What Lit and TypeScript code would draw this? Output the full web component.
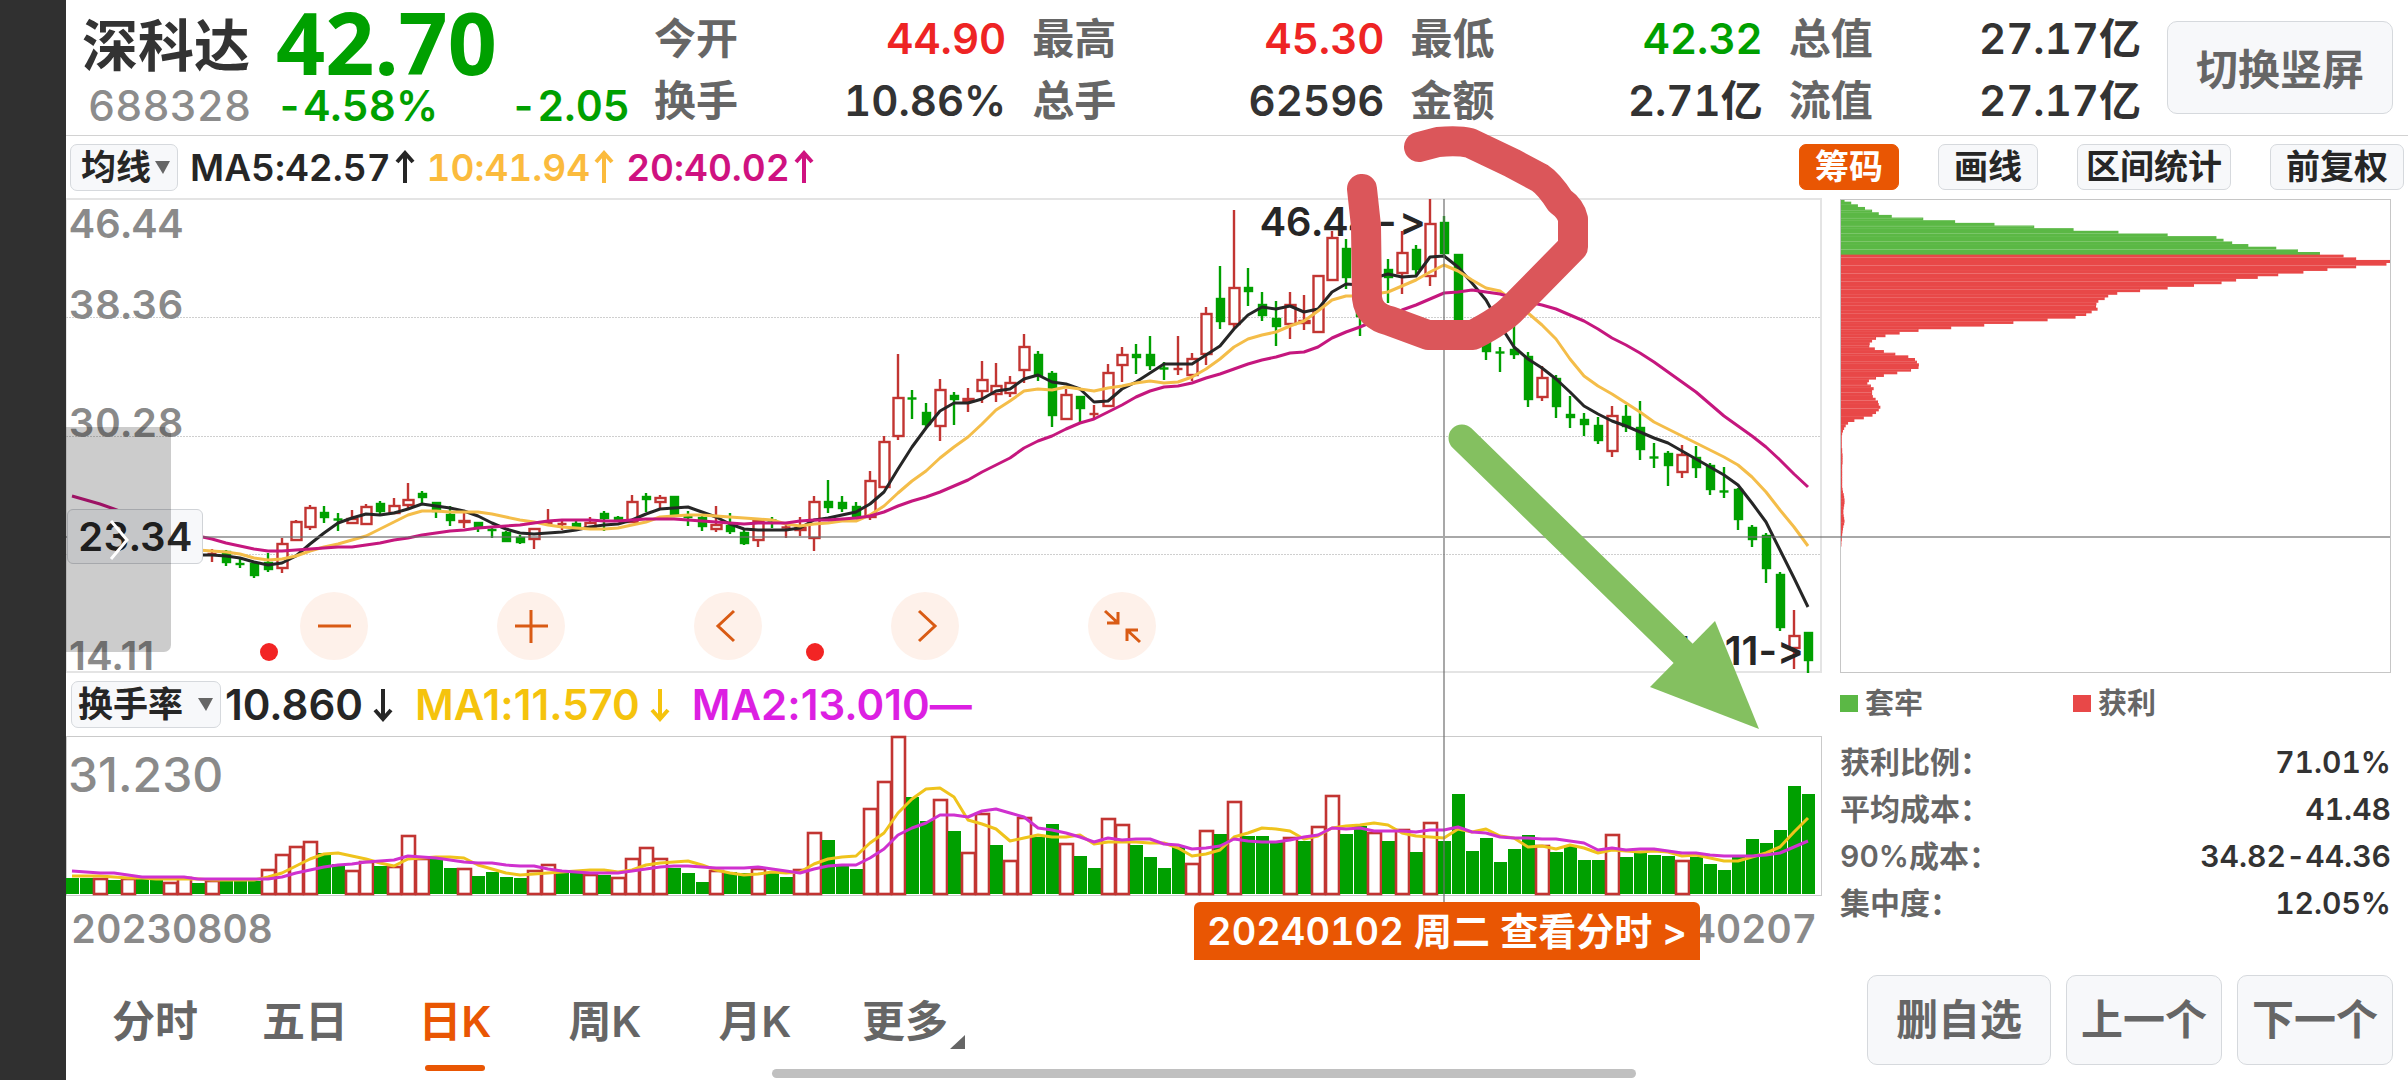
import { LitElement, html, svg, css } from "lit";
import { customElement, property } from "lit/decorators.js";

type Candle = [up: number, high: number, open: number, close: number, low: number] | null;

const STEP = 14;
const FIRST_X = 72;
const xAt = (i: number) => FIRST_X + STEP * i;

// Daily candles, from the first visible one; null where nothing is drawn.
const FIRST_CANDLE = 10;
const candles: Candle[] = [
  [1, 549, 553, 555, 562], [0, 550, 551, 563, 566], [0, 558, 563, 565, 568], [0, 563, 563, 576, 578],
  [0, 553, 562, 570, 572], [1, 538, 543, 569, 573], [1, 520, 521, 541, 541], [1, 505, 507, 528, 530],
  [0, 506, 512, 518, 523], [0, 513, 519, 520, 531], [1, 510, 518, 524, 524], [1, 504, 506, 525, 525],
  [0, 501, 503, 512, 515], [1, 498, 505, 514, 514], [1, 483, 499, 506, 508], [0, 491, 493, 498, 504],
  [0, 502, 502, 512, 518], [0, 506, 514, 521, 526], [1, 513, 520, 523, 528], [0, 522, 522, 528, 532],
  [0, 527, 529, 531, 538], [0, 531, 532, 542, 542], [0, 535, 537, 543, 544], [1, 528, 528, 540, 549],
  [1, 509, 522, 524, 524], [1, 520, 523, 525, 530], [0, 521, 523, 528, 528], [1, 517, 522, 528, 528],
  [0, 511, 513, 519, 531], [0, 516, 517, 520, 521], [1, 495, 501, 523, 523], [0, 493, 496, 500, 512],
  [1, 495, 497, 503, 508], [0, 496, 496, 515, 515], [0, 511, 516, 518, 526], [0, 515, 517, 527, 531],
  [1, 506, 524, 530, 532], [0, 513, 525, 532, 534], [0, 529, 532, 544, 545], [1, 520, 520, 541, 547],
  [0, 517, 520, 521, 528], [1, 523, 527, 528, 538], [1, 517, 527, 531, 536], [1, 496, 501, 539, 551],
  [0, 480, 501, 508, 513], [0, 496, 502, 509, 512], [0, 502, 506, 517, 517], [1, 471, 480, 518, 520],
  [1, 436, 441, 488, 488], [1, 354, 397, 437, 440], [0, 390, 398, 399, 419], [0, 403, 412, 425, 427],
  [1, 379, 389, 427, 441], [0, 392, 395, 400, 425], [1, 388, 398, 402, 412], [1, 361, 379, 392, 403],
  [1, 363, 385, 395, 402], [1, 376, 382, 394, 397], [1, 334, 346, 371, 383], [0, 351, 354, 376, 381],
  [0, 371, 373, 416, 427], [1, 389, 394, 420, 420], [0, 396, 396, 409, 422], [1, 405, 413, 415, 420],
  [1, 364, 372, 407, 407], [1, 347, 354, 366, 382], [0, 344, 354, 358, 374], [0, 336, 354, 366, 370],
  [0, 362, 368, 369, 380], [1, 336, 368, 370, 375], [1, 353, 358, 376, 381], [1, 307, 313, 355, 365],
  [0, 266, 298, 322, 329], [1, 210, 287, 325, 329], [0, 268, 287, 292, 306], [0, 292, 304, 316, 321],
  [0, 301, 318, 327, 346], [1, 292, 304, 325, 339], [1, 295, 320, 324, 330], [1, 275, 275, 333, 333],
  [1, 231, 237, 281, 281], [0, 239, 248, 278, 289], [0, 280, 290, 317, 336], null,
  [0, 259, 269, 278, 303], [1, 231, 252, 274, 294], [0, 245, 249, 270, 275], [1, 199, 223, 277, 286],
  [0, 216, 222, 254, 258], [0, 254, 254, 340, 340], null, [0, 330, 335, 352, 360],
  [0, 347, 352, 353, 372], [0, 322, 349, 355, 359], [0, 352, 356, 400, 407], [1, 366, 377, 398, 401],
  [0, 375, 378, 407, 418], [0, 396, 414, 418, 428], [0, 413, 419, 425, 436], [0, 417, 425, 441, 444],
  [1, 406, 415, 452, 457], [0, 405, 416, 427, 432], [0, 401, 427, 450, 460], [0, 443, 457, 458, 468],
  [0, 451, 453, 466, 486], [1, 445, 454, 473, 478], [0, 446, 457, 468, 478], [0, 463, 465, 490, 495],
  [0, 467, 491, 492, 498], [0, 488, 489, 520, 530], [0, 525, 527, 540, 547], [0, 533, 535, 569, 583],
  [0, 572, 574, 628, 631], [1, 610, 635, 649, 669], [0, 632, 632, 661, 673],
];

// The two shorter averages start one day before the first candle.
const FIRST_AVERAGE = 9;
const ma5 = [
  555, 555, 556, 558, 562, 565, 563, 556, 544, 533, 523, 518, 514, 515, 513, 509, 504, 506, 508, 511, 516, 523, 529, 533,
  534, 533, 532, 530, 527, 525, 524, 520, 514, 509, 508, 507, 512, 517, 524, 529, 530, 530, 530, 528, 520, 518, 515, 512,
  504, 492, 469, 447, 428, 411, 403, 403, 399, 391, 389, 379, 375, 382, 384, 389, 402, 401, 389, 382, 373, 364, 364, 364,
  355, 346, 329, 315, 307, 309, 306, 312, 309, 292, 284, 285, 278, 274, 277, 276, 257, 256, 267, 283, 300, 325, 347, 359,
  368, 379, 392, 406, 414, 421, 426, 432, 438, 443, 451, 459, 467, 475, 485, 503, 522, 550, 578, 607,
];
const ma10 = [
  550, 551, 552, 554, 558, 560, 559, 556, 551, 547, 544, 540, 536, 529, 522, 515, 511, 511, 512, 512, 512, 514, 517, 520,
  522, 525, 527, 528, 529, 529, 528, 525, 522, 517, 516, 515, 515, 516, 517, 518, 519, 520, 524, 526, 524, 523, 521, 521,
  515, 506, 493, 481, 471, 458, 447, 437, 424, 410, 401, 391, 389, 390, 387, 389, 391, 388, 386, 383, 381, 383, 382, 377,
  369, 359, 347, 339, 335, 332, 326, 321, 311, 300, 296, 296, 294, 292, 286, 280, 272, 265, 271, 280, 288, 291, 302, 313,
  325, 339, 359, 376, 386, 394, 403, 412, 422, 429, 436, 443, 450, 457, 465, 477, 492, 510, 527, 546,
];
const ma20 = [
  496, 500, 504, 509, 514, 519, 524, 529, 533, 536, 539, 543, 546, 549, 551, 551, 550, 549, 548, 547, 547, 545, 543, 540,
  538, 535, 533, 531, 530, 528, 527, 526, 525, 523, 521, 520, 520, 520, 521, 521, 520, 519, 519, 519, 520, 521, 522, 523,
  524, 523, 523, 523, 521, 520, 520, 519, 518, 516, 512, 506, 501, 497, 492, 486, 480, 472, 465, 458, 448, 441, 436, 429,
  423, 419, 412, 405, 397, 391, 387, 386, 383, 378, 374, 369, 364, 360, 357, 353, 352, 347, 338, 332, 327, 321, 317, 310,
  305, 299, 293, 292, 290, 292, 294, 298, 302, 305, 309, 315, 321, 329, 338, 345, 353, 362, 372, 382, 392, 404, 416, 426,
  436, 447, 460, 474, 487,
];

// Turnover bars: top edge, and which of them are rising days.
const turnover = [
  878, 878, 878, 880, 878, 879, 879, 882, 877, 883, 880, 880, 881, 881, 869, 854, 846, 841, 853, 864, 870, 861, 866, 866,
  835, 858, 858, 868, 868, 876, 872, 877, 878, 870, 864, 872, 872, 874, 875, 877, 858, 847, 858, 868, 873, 882, 870, 872,
  873, 868, 873, 877, 869, 832, 840, 866, 869, 808, 781, 736, 797, 821, 799, 831, 852, 813, 845, 860, 817, 837, 824, 843,
  856, 868, 818, 824, 845, 857, 868, 847, 863, 830, 834, 801, 836, 836, 841, 837, 841, 826, 795, 834, 826, 832, 841, 829,
  852, 822, 841, 794, 851, 838, 862, 849, 835, 845, 852, 846, 860, 860, 834, 857, 853, 855, 856, 860, 857, 864, 870, 857,
  839, 843, 830, 786, 794,
];
const rising = new Set([
  2, 4, 7, 8, 10, 14, 15, 16, 17, 20, 21, 23, 24, 25, 28, 33, 34, 37, 39, 40, 41, 42, 46, 49, 52, 53, 57, 58, 59, 62, 64,
  65, 67, 68, 71, 74, 75, 80, 81, 83, 87, 89, 90, 93, 95, 97, 105, 110, 115,
]);
const turnoverMa1 = [
  876, 876, 876, 877, 878, 878, 879, 879, 879, 879, 880, 880, 880, 880, 877, 873, 866, 859, 854, 853, 856, 859, 863, 866,
  859, 858, 857, 857, 858, 865, 869, 873, 875, 874, 873, 872, 871, 870, 870, 872, 870, 865, 863, 862, 861, 865, 870, 873,
  875, 874, 872, 873, 872, 864, 859, 857, 856, 843, 833, 813, 799, 789, 788, 797, 820, 824, 829, 841, 838, 835, 837, 837,
  835, 844, 842, 842, 842, 843, 843, 848, 856, 854, 850, 837, 833, 828, 829, 831, 839, 836, 828, 826, 825, 823, 825, 833,
  836, 837, 838, 829, 832, 829, 836, 838, 847, 846, 849, 845, 848, 853, 850, 851, 852, 851, 852, 856, 855, 858, 861, 861,
  857, 853, 847, 832, 818,
];
const turnoverMa2 = [
  871, 872, 873, 873, 875, 877, 877, 877, 877, 879, 879, 879, 879, 879, 879, 877, 873, 870, 867, 865, 864, 862, 861, 860,
  856, 857, 858, 860, 862, 863, 863, 865, 866, 866, 869, 871, 872, 873, 873, 873, 871, 869, 867, 866, 866, 867, 868, 868,
  868, 867, 869, 871, 873, 869, 866, 865, 865, 858, 849, 835, 828, 823, 815, 815, 817, 811, 809, 813, 817, 828, 830, 833,
  837, 842, 838, 840, 839, 839, 844, 845, 849, 848, 846, 839, 841, 842, 842, 840, 837, 835, 828, 829, 828, 831, 831, 831,
  832, 830, 830, 827, 832, 833, 837, 838, 838, 839, 839, 841, 843, 850, 848, 850, 849, 849, 851, 853, 853, 855, 856, 856,
  856, 855, 853, 847, 841,
];

// Chip distribution by price level, as shares of the widest level (1395).
const TRAPPED_LEVELS = 21;
const chips = [
  9, 26, 43, 61, 79, 96, 129, 209, 290, 390, 491, 591, 705, 830, 954, 972, 994, 1035, 1106, 1161, 1217, 1277, 1309, 1395,
  1386, 1309, 1236, 1175, 1111, 1059, 1004, 967, 897, 830, 760, 702, 679, 670, 654, 649, 648, 652, 637, 623, 596, 525,
  438, 364, 280, 197, 149, 113, 89, 79, 73, 72, 86, 109, 138, 171, 188, 193, 198, 197, 178, 143, 109, 89, 71, 67, 76, 83,
  79, 79, 81, 88, 94, 96, 100, 96, 89, 80, 58, 34, 18, 12, 8, 5, 3, 2, 2, 2, 2, 2, 3, 3, 4, 4, 4, 4, 3, 3, 3, 3, 3, 3, 3,
  3, 3, 4, 5, 7, 8, 9, 9, 8, 7, 6, 6, 7, 8, 9, 8, 6, 5, 4, 3, 2, 2, 1, 1,
];

const points = (ys: number[], first = 0) => ys.map((y, i) => `${xAt(i + first)},${y}`).join(" ");

@customElement("trend-arrow")
class TrendArrow extends LitElement {
  @property() dir = "up";
  static styles = css`
    :host { display: inline-block; width: 20px; height: 34px; }
    .glyph { display: block; width: 100%; height: 100%; fill: none; stroke: currentColor; stroke-width: 4; }
  `;
  render() {
    return html`<svg class="glyph" viewBox="0 0 20 34" aria-hidden="true">
      ${this.dir === "up"
        ? svg`<path d="M10 33V3M2 12L10 3L18 12"></path>`
        : svg`<path d="M10 1V31M2 22L10 31L18 22"></path>`}
    </svg>`;
  }
}

@customElement("price-chart")
class PriceChart extends LitElement {
  static styles = css`
    :host { display: block; height: 476px; }
    .plot { display: block; width: 100%; height: 100%; }
    .frame { fill: none; stroke: #e4e4e4; stroke-width: 2; }
    .grid { stroke: #cfcfcf; stroke-width: 1; stroke-dasharray: 2 1; }
    .up { stroke: #c23532; stroke-width: 2.4; fill: #fff; }
    .down { stroke: #00a000; stroke-width: 2.4; fill: #00a000; }
    .line { fill: none; stroke-width: 3; stroke-linejoin: round; }
    .ma5 { stroke: #262626; }
    .ma10 { stroke: #f4bd49; }
    .ma20 { stroke: #c5177e; }
    .event { fill: #f22424; }
  `;
  render() {
    return html`<svg class="plot" viewBox="66 198 1756 476" preserveAspectRatio="none" aria-label="日K">
      <rect class="frame" x="66" y="199" width="1755" height="473"></rect>
      ${[317, 436, 554].map((y) => svg`<line class="grid" x1="66" x2="1821" y1=${y + 0.5} y2=${y + 0.5}></line>`)}
      ${candles.map((c, n) => {
        if (!c) return null;
        const x = xAt(n + FIRST_CANDLE);
        const [up, high, top, bottom, low] = c;
        const thin = bottom - top <= 2;
        return svg`<g class=${up ? "up" : "down"}>
          <line x1=${x} x2=${x} y1=${high} y2=${low}></line>
          ${thin
            ? svg`<line x1=${x - 4.5} x2=${x + 4.5} y1=${(top + bottom) / 2} y2=${(top + bottom) / 2}></line>`
            : up
              ? svg`<rect x=${x - 4.5} y=${top + 1} width="10" height=${Math.max(bottom - top - 2, 1)}></rect>`
              : svg`<rect x=${x - 3} y=${top + 1} width="7" height=${bottom - top - 2}></rect>`}
        </g>`;
      })}
      <polyline class="line ma5" points=${points(ma5, FIRST_AVERAGE)}></polyline>
      <polyline class="line ma10" points=${points(ma10, FIRST_AVERAGE)}></polyline>
      <polyline class="line ma20" points=${points(ma20)}></polyline>
      <circle class="event" cx="269" cy="652" r="9"></circle>
      <circle class="event" cx="815" cy="652" r="9"></circle>
    </svg>`;
  }
}

@customElement("turnover-chart")
class TurnoverChart extends LitElement {
  static styles = css`
    :host { display: block; height: 161px; }
    .plot { display: block; width: 100%; height: 100%; }
    .frame { fill: none; stroke: #cacaca; stroke-width: 1; }
    .up { stroke: #c23532; stroke-width: 2.6; fill: #fff; }
    .down { fill: #00a000; }
    .line { fill: none; stroke-width: 3; stroke-linejoin: round; }
    .first { stroke: #efc31c; }
    .second { stroke: #cf31cf; }
  `;
  render() {
    return html`<svg class="plot" viewBox="66 735 1756 161" preserveAspectRatio="none" aria-label="换手率">
      <rect class="frame" x="66.5" y="736.5" width="1755" height="159"></rect>
      ${turnover.map((y, i) =>
        rising.has(i)
          ? svg`<rect class="up" x=${xAt(i) - 6} y=${y + 1} width="13" height=${893 - y}></rect>`
          : svg`<rect class="down" x=${xAt(i) - 6} y=${y} width="13" height=${894 - y}></rect>`,
      )}
      <polyline class="line first" points=${points(turnoverMa1)}></polyline>
      <polyline class="line second" points=${points(turnoverMa2)}></polyline>
    </svg>`;
  }
}

@customElement("chip-chart")
class ChipChart extends LitElement {
  static styles = css`
    :host { display: block; height: 475px; }
    .plot { display: block; width: 100%; height: 100%; }
    .frame { fill: none; stroke: #c6c6c6; stroke-width: 1; }
    .trapped { fill: #5bb845; }
    .profit { fill: #e84848; }
    .seam { stroke: #fff; stroke-opacity: 0.14; stroke-width: 1; }
  `;
  render() {
    const pitch = 2.65;
    return html`<svg class="plot" viewBox="0 0 551 475" preserveAspectRatio="none" aria-label="筹码">
      ${chips.map((w, i) => svg`<rect class=${i < TRAPPED_LEVELS ? "trapped" : "profit"}
        x="1" y=${1 + i * pitch} width=${(w / 1395) * 549} height=${pitch + 0.4}></rect>`)}
      ${chips.map((w, i) =>
        i % 3 === 1 && w > 60
          ? svg`<line class="seam" x1="1" x2=${(w / 1395) * 549} y1=${Math.round(1 + i * pitch) + 0.5} y2=${Math.round(1 + i * pitch) + 0.5}></line>`
          : null,
      )}
      <rect class="frame" x="0.5" y="1.5" width="550" height="473"></rect>
    </svg>`;
  }
}

const quotes: [string, string, string][] = [
  ["今开", "44.90", "red"], ["最高", "45.30", "red"], ["最低", "42.32", "green"], ["总值", "27.17亿", ""],
  ["换手", "10.86%", ""], ["总手", "62596", ""], ["金额", "2.71亿", ""], ["流值", "27.17亿", ""],
];
const chipStats = [
  ["获利比例：", "71.01%"], ["平均成本：", "41.48"], ["90%成本：", "34.82-44.36"], ["集中度：", "12.05%"],
];
const controls = [
  ["缩小", "M-16 0H17"],
  ["放大", "M-16 0H17M0 -16V17"],
  ["向左", "M6 -15L-10 0L6 15"],
  ["向右", "M-6 -15L10 0L-6 15"],
  ["收起", "M-17 -15L-4 -3M-4 -14V-3H-15M18 16L5 4M5 15V4H16"],
];
const periods = ["分时", "五日", "日K", "周K", "月K", "更多"];

@customElement("app-root")
class AppRoot extends LitElement {
  static styles = css`
    :host {
      display: block;
      font-family: Inter, "Noto Sans CJK SC", sans-serif;
      font-weight: 600;
      font-variant-numeric: tabular-nums;
      font-variant-ligatures: no-contextual;
      color: #333;
      background: #fff;
      line-height: 1;
    }
    * { box-sizing: border-box; }
    button, select { font: inherit; color: inherit; margin: 0; cursor: pointer; }
    dl, dd, dt { margin: 0; }
    .page { position: relative; display: flex; min-height: 100vh; overflow: hidden; }
    .rail { width: 66px; flex: none; background: #303030; }
    .main { flex: 1; min-width: 0; display: flex; flex-direction: column; }
    .red { color: #ee2424; }
    .green { color: #00a000; }

    .header { display: flex; align-items: center; height: 136px; padding: 0 15px 0 16px; border-bottom: 1px solid #d2d2d2; }
    .identity { width: 548px; display: grid; grid-template-columns: 194px 1fr; row-gap: 4px; align-items: center; }
    .name { font-size: 56px; line-height: 64px; margin: 0; padding-top: 8px; font-weight: 600; white-space: nowrap; }
    .price { font-family: "Noto Sans", sans-serif; font-size: 86px; font-weight: 700; line-height: 72px; }
    .code { font-size: 42px; line-height: 48px; color: #8c8c8c; padding-left: 6px; font-weight: 500; }
    .change { display: flex; justify-content: space-between; font-size: 42px; line-height: 48px; }
    .quotes { flex: 1; display: grid; grid-template-columns: repeat(4, 1fr); gap: 20px 26px; margin: 0 26px 0 24px; padding-top: 5px; }
    .quote { display: flex; justify-content: space-between; align-items: center; font-size: 42px; line-height: 42px; }
    .quote dt { color: #666; }
    .key { border: 1px solid #d6d9dd; border-radius: 10px; background: #f7f8fa; color: #666; font-size: 42px; line-height: 1; height: 90px; padding: 0 14px; white-space: nowrap; }
    .key.wide { padding: 0 28px; }
    .key.tall { height: 93px; padding-top: 4px; }

    .averages { display: flex; align-items: center; height: 62px; padding: 0 4px; }
    .select { position: relative; display: flex; align-items: center; }
    .select select { appearance: none; width: 108px; height: 47px; padding: 0 0 0 10px; border: 1px solid #d6d9dd; border-radius: 7px; background: #f7f8fa; color: #262626; font-size: 35px; line-height: 45px; }
    .select.wide select { width: 150px; padding-left: 6px; }
    .caret { position: absolute; right: 8px; width: 15px; height: 13px; fill: #666; pointer-events: none; }
    .reading { display: flex; align-items: center; gap: 4px; font-size: 37px; color: #262626; margin-left: 12px; white-space: nowrap; }
    .reading.orange { color: #fbbb3d; }
    .reading.pink { color: #cf1280; }
    .tools { display: flex; gap: 39px; margin-left: auto; }
    .tool { height: 46px; border: 1px solid #d6d9dd; border-radius: 7px; background: #f7f8fa; color: #262626; font-size: 34px; line-height: 1; padding: 0 15px; white-space: nowrap; }
    .tool.compact { padding: 0 8px; }
    .tool.on { background: #e95603; border-color: #e95603; color: #fff; }

    .body { position: relative; display: grid; grid-template-columns: minmax(0, 1756fr) minmax(0, 586fr); }
    .left { position: relative; }
    .crosshair { position: absolute; inset: 0; width: 100%; height: 100%; pointer-events: none; fill: none; stroke: #6e6e6e; stroke-opacity: 0.6; stroke-width: 2; }
    .tick { position: absolute; left: 3px; font-size: 40px; color: #8a8a8a; }
    .t1 { top: 6px; } .t2 { top: 87px; } .t3 { top: 205px; } .t4 { top: 438px; }
    .extreme { position: absolute; font-size: 40px; color: #262626; white-space: nowrap; }
    .highest { top: 4px; right: 396px; }
    .lowest, .t4 { font-variant-numeric: normal; }
    .lowest { top: 433px; right: 18px; }
    .controls { position: absolute; top: 394px; left: 234px; display: flex; gap: 129px; }
    .control { width: 68px; height: 68px; padding: 0; border: 0; border-radius: 50%; background: #fef1ea; display: block; }
    .control svg { display: block; fill: none; stroke: #d95b14; stroke-width: 3; }
    .level { position: absolute; left: 1px; top: 311px; width: 136px; height: 55px; border: 1px solid #d0d3d7; border-radius: 6px; background: #f7f8fa; font-size: 40px; line-height: 53px; text-align: center; color: #262626; }
    .drawer { position: absolute; left: 0; top: 229px; width: 105px; height: 225px; padding: 0; border: 0; border-radius: 0 7px 7px 0; background: rgba(0, 0, 0, 0.2); }
    .drawer svg { display: block; fill: none; stroke: #fff; stroke-width: 3; }

    .indicator { display: flex; align-items: center; height: 61px; padding: 0 5px; }
    .indicator .reading { font-size: 42px; margin-left: 4px; gap: 10px; font-variant-numeric: normal; }
    .indicator .yellow { color: #f5c30d; margin-left: 22px; }
    .indicator .violet { color: #dc1fe2; margin-left: 22px; gap: 0; }
    .peak { position: absolute; left: 2px; top: 553px; font-size: 48px; line-height: 48px; color: #8a8a8a; font-weight: 500; font-variant-numeric: normal; }
    .dates { position: relative; display: flex; justify-content: space-between; height: 64px; padding: 13px 5px 0 5px; font-size: 39px; line-height: 40px; color: #8a8a8a; }
    .day { position: absolute; right: 122px; top: 6px; height: 58px; padding: 0 13px; border: 0; border-radius: 6px 6px 0 0; background: #e95603; color: #fff; font-size: 38px; line-height: 58px; white-space: nowrap; }

    .side { padding: 0 17px 0 18px; }
    .legend { display: grid; grid-template-columns: 233px 1fr; height: 60px; align-items: center; color: #666; font-size: 29px; }
    .legend span { display: flex; align-items: center; gap: 7px; }
    .swatch { width: 18px; height: 17px; background: #5bb845; }
    .swatch.profit { background: #e84848; }
    .stats { padding-top: 6px; font-size: 30px; line-height: 47px; }
    .stat { display: flex; justify-content: space-between; color: #666; }
    .stat dd { color: #333; }

    .footer { position: relative; display: flex; justify-content: space-between; padding: 15px 15px 0 14px; height: 120px; }
    .periods { display: flex; }
    .period { position: relative; width: 150px; height: 98px; padding: 0 0 6px; border: 0; background: none; color: #666; font-size: 43px; line-height: 1; }
    .period.on { color: #e95603; }
    .period.on::after { content: ""; position: absolute; left: 45px; bottom: 2px; width: 60px; height: 6px; border-radius: 3px; background: #e95603; }
    .more { position: absolute; right: 15px; bottom: 24px; width: 15px; height: 14px; fill: #666; }
    .keys { display: flex; gap: 15px; }
    .home { position: absolute; left: 706px; right: 772px; bottom: 2px; height: 9px; border-radius: 5px; background: #c0c0c0; }

    .markup { position: absolute; inset: 0; width: 100%; height: 100%; pointer-events: none; }
    .scribble { fill: none; stroke: #db565a; stroke-width: 30; stroke-linecap: round; stroke-linejoin: round; }
    .shaft { stroke: #84c060; stroke-width: 27; stroke-linecap: round; }
    .head { fill: #84c060; }
  `;

  private caret() {
    return html`<svg class="caret" viewBox="0 0 15 13" aria-hidden="true"><path d="M0 0H15L8 13Z"></path></svg>`;
  }

  render() {
    return html`<div class="page">
      <div class="rail"></div>
      <div class="main">
        <header class="header">
          <div class="identity">
            <h1 class="name">深科达</h1>
            <div class="price green">42.70</div>
            <div class="code">688328</div>
            <div class="change green"><span>-4.58%</span><span>-2.05</span></div>
          </div>
          <dl class="quotes">
            ${quotes.map(([k, v, tone]) => html`<div class="quote"><dt>${k}</dt><dd class=${tone}>${v}</dd></div>`)}
          </dl>
          <button class="key wide tall">切换竖屏</button>
        </header>

        <div class="averages">
          <div class="select"><select aria-label="主图指标"><option>均线</option></select>${this.caret()}</div>
          <div class="reading">MA5:42.57<trend-arrow></trend-arrow></div>
          <div class="reading orange">10:41.94<trend-arrow></trend-arrow></div>
          <div class="reading pink">20:40.02<trend-arrow></trend-arrow></div>
          <div class="tools">
            <button class="tool on">筹码</button>
            <button class="tool">画线</button>
            <button class="tool compact">区间统计</button>
            <button class="tool">前复权</button>
          </div>
        </div>

        <div class="body">
          <div class="left">
            <price-chart></price-chart>
            <span class="tick t1">46.44</span>
            <span class="tick t2">38.36</span>
            <span class="tick t3">30.28</span>
            <span class="tick t4">14.11</span>
            <span class="extreme highest">46.44-&gt;</span>
            <span class="extreme lowest">14.11-&gt;</span>
            <div class="indicator">
              <div class="select wide"><select aria-label="副图指标"><option>换手率</option></select>${this.caret()}</div>
              <div class="reading">10.860<trend-arrow dir="down"></trend-arrow></div>
              <div class="reading yellow">MA1:11.570<trend-arrow dir="down"></trend-arrow></div>
              <div class="reading violet">MA2:13.010<span>—</span></div>
            </div>
            <turnover-chart></turnover-chart>
            <span class="peak">31.230</span>
            <div class="dates">
              <span>20230808</span><span>20240207</span>
              <button class="day">20240102 周二 查看分时 &gt;</button>
            </div>
          </div>
          <aside class="side">
            <chip-chart></chip-chart>
            <div class="legend">
              <span><i class="swatch"></i>套牢</span>
              <span><i class="swatch profit"></i>获利</span>
            </div>
            <dl class="stats">
              ${chipStats.map(([k, v]) => html`<div class="stat"><dt>${k}</dt><dd>${v}</dd></div>`)}
            </dl>
          </aside>
          <svg class="crosshair" viewBox="66 198 2342 762" preserveAspectRatio="none" aria-hidden="true">
            <path d="M66 537H2390M1444 199V902"></path>
          </svg>
          <div class="controls">
            ${controls.map(([label, d]) => html`<button class="control" aria-label=${label}>
              <svg viewBox="-34 -34 68 68" width="68" height="68"><path d=${d}></path></svg>
            </button>`)}
          </div>
          <div class="level">23.34</div>
          <button class="drawer" aria-label="展开">
            <svg viewBox="0 0 105 225" width="105" height="225"><path d="M45 94L61 113L45 132"></path></svg>
          </button>
        </div>

        <footer class="footer">
          <nav class="periods">
            ${periods.map((p) => html`<button class="period ${p === "日K" ? "on" : ""}">${p}${p === "更多"
              ? html`<svg class="more" viewBox="0 0 15 14" aria-hidden="true"><path d="M15 0V14H0Z"></path></svg>`
              : null}</button>`)}
          </nav>
          <div class="keys">
            <button class="key wide">删自选</button>
            <button class="key">上一个</button>
            <button class="key">下一个</button>
          </div>
          <div class="home"></div>
        </footer>
      </div>
      <svg class="markup" viewBox="0 0 2408 1080" preserveAspectRatio="none" aria-hidden="true">
        <path class="scribble" d="M1362 189L1366 226L1367 298Q1369 316 1390 321L1428 335L1473 335Q1502 320 1513 308L1573 247L1573 219Q1571 209 1560 201Q1549 184 1540 178L1512 163L1470 143Q1458 140 1438 142L1419 147"></path>
        <line class="shaft" x1="1462" y1="438" x2="1690" y2="660"></line>
        <polygon class="head" points="1759,729 1715,621 1650,687"></polygon>
      </svg>
    </div>`;
  }
}
